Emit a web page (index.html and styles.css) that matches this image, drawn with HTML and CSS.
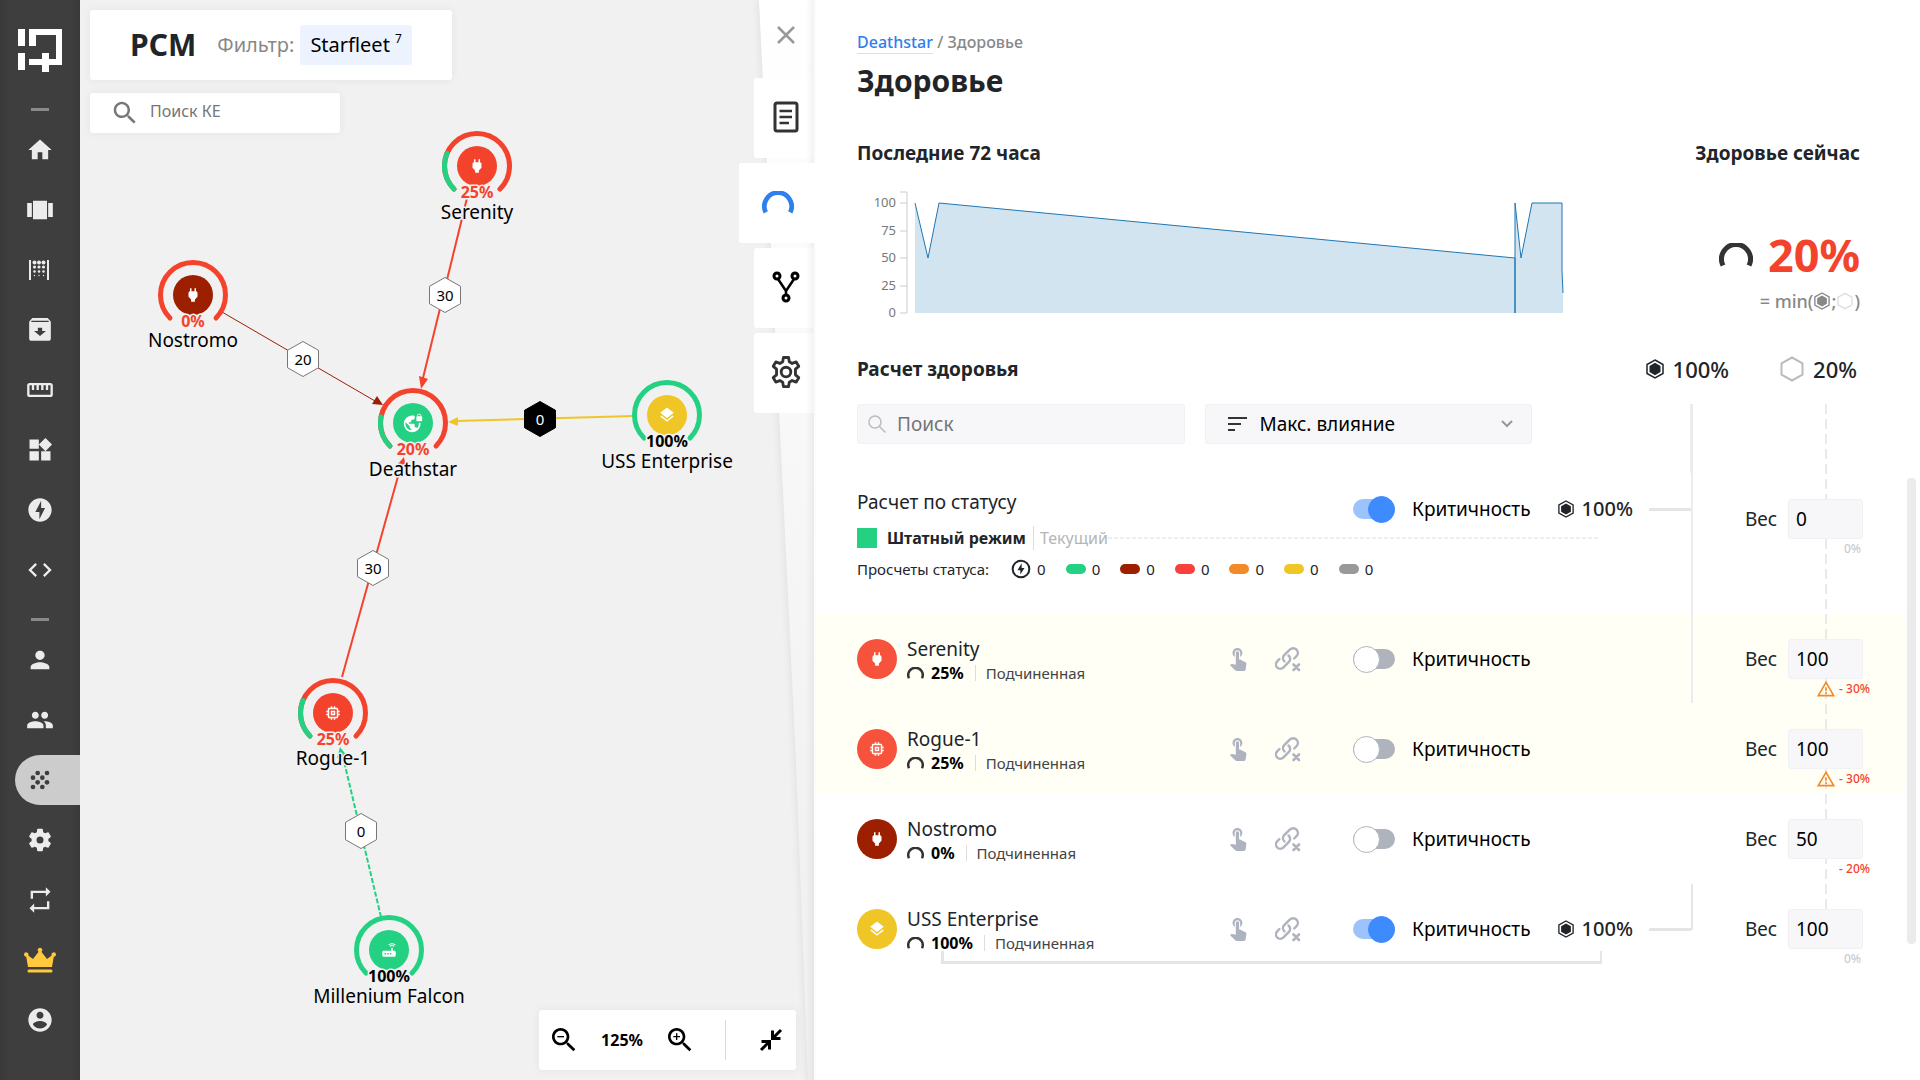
FILE: index.html
```html
<!DOCTYPE html>
<html lang="ru">
<head>
<meta charset="utf-8">
<title>РСМ — Здоровье</title>
<meta name="viewport" content="width=device-width, initial-scale=1">
<link rel="stylesheet" href="styles.css">
</head>
<body>
<svg class="sprite" aria-hidden="true">
  <symbol id="i-home" viewBox="0 0 24 24"><path d="M10 20v-6h4v6h5v-8h3L12 3 2 12h3v8z"/></symbol>
  <symbol id="i-carousel" viewBox="0 0 24 24"><path d="M6 20h12V4H6v16zm-5-2h4V6H1v12zM19 6v12h4V6h-4z"/></symbol>
  <symbol id="i-curtain" viewBox="0 0 24 24"><path d="M1 2h2v20H1zM19 2h2v20h-2z"/><g><circle cx="6.500" cy="4.500" r="2"/><circle cx="11" cy="4.500" r="2"/><circle cx="15.500" cy="4.500" r="2"/><circle cx="6.500" cy="9" r="1.600"/><circle cx="11" cy="9" r="1.600"/><circle cx="15.500" cy="9" r="1.600"/><circle cx="6.500" cy="13.500" r="1.300"/><circle cx="11" cy="13.500" r="1.300"/><circle cx="15.500" cy="13.500" r="1.300"/><circle cx="6.500" cy="17.500" r="0.700"/><circle cx="11" cy="17.500" r="0.700"/><circle cx="15.500" cy="17.500" r="0.700"/></g></symbol>
  <symbol id="i-archive" viewBox="0 0 24 24"><path fill-rule="evenodd" d="M5 1h14l2 2c.6.600 1 1.200 1 2v15c0 1.100-.9 2-2 2H4c-1.100 0-2-.9-2-2V5c0-.8.400-1.400 1-2zM4 3.500v1h16v-1zM12 17.500L17.500 13H14v-3h-4v3H6.500z"/></symbol>
  <symbol id="i-ruler" viewBox="0 0 24 24"><path d="M21 6H3c-1.100 0-2 .9-2 2v8c0 1.100.9 2 2 2h18c1.100 0 2-.9 2-2V8c0-1.100-.9-2-2-2zm0 10H3V8h2v4h2V8h2v4h2V8h2v4h2V8h2v4h2V8h2v8z"/></symbol>
  <symbol id="i-widgets" viewBox="0 0 24 24"><path d="M13 13v8h8v-8h-8zM3 21h8v-8H3v8zM3 3v8h8V3H3zm13.660-1.310L11 7.340 16.660 13l5.660-5.660-5.660-5.650z"/></symbol>
  <symbol id="i-bolt" viewBox="0 0 24 24"><path d="M12 2.020c-5.510 0-9.980 4.470-9.980 9.980s4.470 9.980 9.980 9.980 9.980-4.470 9.980-9.980S17.510 2.020 12 2.020zM11.480 20v-6.260H8L13 4v6.260h3.350L11.480 20z"/></symbol>
  <symbol id="i-bolt-line" viewBox="0 0 24 24"><circle cx="12" cy="12" r="10" fill="none" stroke="currentColor" stroke-width="2.400"/><path d="M11.200 18.500v-5H7.800l5-8.300v5.600h3.400z"/></symbol>
  <symbol id="i-code" viewBox="0 0 24 24"><path d="M9.400 16.600L4.800 12l4.600-4.600L8 6l-6 6 6 6 1.400-1.400zm5.200 0l4.600-4.600-4.600-4.600L16 6l6 6-6 6-1.400-1.400z"/></symbol>
  <symbol id="i-person" viewBox="0 0 24 24"><path d="M12 12c2.210 0 4-1.790 4-4s-1.790-4-4-4-4 1.790-4 4 1.790 4 4 4zm0 2c-2.670 0-8 1.340-8 4v2h16v-2c0-2.660-5.330-4-8-4z"/></symbol>
  <symbol id="i-group" viewBox="0 0 24 24"><path d="M16 11c1.660 0 2.990-1.340 2.990-3S17.660 5 16 5c-1.660 0-3 1.340-3 3s1.340 3 3 3zm-8 0c1.660 0 2.990-1.340 2.990-3S9.660 5 8 5C6.340 5 5 6.340 5 8s1.340 3 3 3zm0 2c-2.330 0-7 1.170-7 3.500V19h14v-2.500c0-2.330-4.670-3.500-7-3.500zm8 0c-.29 0-.62.020-.97.050 1.160.84 1.970 1.970 1.970 3.450V19h6v-2.500c0-2.330-4.670-3.500-7-3.500z"/></symbol>
  <symbol id="i-grain" viewBox="0 0 24 24"><circle cx="10" cy="6" r="2"/><circle cx="18" cy="6" r="2"/><circle cx="6" cy="10" r="2"/><circle cx="14" cy="10" r="2"/><circle cx="10" cy="14" r="2"/><circle cx="18" cy="14" r="2"/><circle cx="6" cy="18" r="2"/><circle cx="14" cy="18" r="2"/></symbol>
  <symbol id="i-gear" viewBox="0 0 24 24"><path fill-rule="evenodd" d="M19.140 12.940c.04-.3.060-.61.060-.94 0-.32-.02-.64-.07-.94l2.030-1.580c.18-.14.230-.41.120-.61l-1.920-3.320c-.12-.22-.37-.29-.59-.22l-2.390.96c-.5-.38-1.030-.7-1.620-.94L14.400 2.810c-.04-.24-.24-.41-.48-.41h-3.840c-.24 0-.43.170-.47.410L9.250 5.350C8.660 5.590 8.120 5.920 7.630 6.290L5.240 5.330c-.22-.08-.47 0-.59.220L2.740 8.870c-.12.210-.08.470.12.610l2.030 1.580C4.840 11.360 4.800 11.690 4.800 12s.020.64.070.94l-2.030 1.580c-.18.140-.23.410-.12.610l1.920 3.320c.12.220.37.290.59.220l2.390-.96c.5.380 1.030.7 1.620.94l.36 2.540c.05.240.24.410.48.410h3.840c.24 0 .44-.17.470-.41l.36-2.540c.59-.24 1.130-.56 1.620-.94l2.390.96c.22.080.47 0 .59-.22l1.920-3.320c.12-.22.070-.47-.12-.61zM12 15a3 3 0 1 1 0-6 3 3 0 0 1 0 6z"/></symbol>
  <symbol id="i-gear-line" viewBox="0 0 24 24"><g fill="none" stroke="currentColor" stroke-width="1.900" stroke-linejoin="round"><path d="M10.300 2.300h3.400l.5 2.900 1.900 1.100 2.700-1 1.700 2.900-2.200 1.900v3.800l2.200 1.900-1.700 2.900-2.700-1-1.900 1.100-.5 2.900h-3.400l-.5-2.900-1.900-1.100-2.700 1-1.700-2.900 2.200-1.900v-3.800L3.500 8.200l1.700-2.900 2.700 1 1.900-1.100z"/><circle cx="12" cy="12" r="3.200"/></g></symbol>
  <symbol id="i-repeat" viewBox="0 0 24 24"><path d="M6 6h11v3l4-4-4-4v3H4v7h2V6zm12 12H7v-3l-4 4 4 4v-3h13v-7h-2v5z"/></symbol>
  <symbol id="i-crown" viewBox="0 0 32 26"><path d="M4 20L2.200 9.800A2.200 2.200 0 1 1 4.300 8.400L9 12l5.600-7.200a2.200 2.200 0 1 1 2.800 0L23 12l4.700-3.600a2.200 2.200 0 1 1 2.100 1.400L28 20zM5 22.500h22a1.500 1.500 0 0 1 0 3H5a1.500 1.500 0 0 1 0-3z"/></symbol>
  <symbol id="i-account" viewBox="0 0 24 24"><path d="M12 2C6.480 2 2 6.480 2 12s4.480 10 10 10 10-4.480 10-10S17.520 2 12 2zm0 3c1.660 0 3 1.340 3 3s-1.340 3-3 3-3-1.340-3-3 1.340-3 3-3zm0 14.200c-2.500 0-4.710-1.280-6-3.220.03-1.990 4-3.080 6-3.080 1.990 0 5.970 1.090 6 3.080-1.290 1.940-3.500 3.220-6 3.220z"/></symbol>
  <symbol id="i-search" viewBox="0 0 24 24"><path d="M15.500 14h-.79l-.28-.27C15.410 12.590 16 11.110 16 9.500 16 5.910 13.090 3 9.500 3S3 5.910 3 9.500 5.910 16 9.500 16c1.610 0 3.090-.59 4.230-1.570l.27.280v.79l5 4.990L20.490 19l-4.990-5zm-6 0C7.010 14 5 11.990 5 9.500S7.010 5 9.500 5 14 7.010 14 9.500 11.990 14 9.500 14z"/></symbol>
  <symbol id="i-search-thin" viewBox="0 0 20 20"><g fill="none" stroke="currentColor" stroke-width="1.500"><circle cx="8" cy="8" r="6"/><path d="M12.500 12.500l6 6"/></g></symbol>
  <symbol id="i-touch" viewBox="4 2 16 22"><path d="M9 11.240V7.500C9 6.120 10.120 5 11.500 5S14 6.120 14 7.500v3.740c1.210-.81 2-2.180 2-3.740C16 5.010 13.990 3 11.500 3S7 5.010 7 7.500c0 1.560.79 2.930 2 3.740zm9.840 4.630l-4.540-2.260c-.17-.07-.35-.11-.54-.11H13v-6c0-.83-.67-1.500-1.500-1.500S10 6.670 10 7.500v10.740l-3.430-.72c-.08-.01-.15-.03-.24-.03-.31 0-.59.130-.79.330l-.79.800 4.940 4.940c.27.270.65.440 1.060.440h6.790c.75 0 1.330-.55 1.440-1.280l.75-5.270c.01-.07.020-.14.020-.2 0-.62-.38-1.160-.91-1.380z"/></symbol>
  <symbol id="i-unlink" viewBox="0 0 26 26"><g fill="none" stroke="currentColor" stroke-width="2.400" stroke-linecap="round"><path d="M9.500 15.500c-2-2-2-4.600-.3-6.300l5.600-5.600c1.900-1.900 4.900-1.900 6.700 0s1.800 4.700 0 6.600l-2.300 2.300"/><path d="M13.500 9.500c2 1.800 2.200 4.600.4 6.400l-5.400 5.500c-1.900 1.900-4.700 1.900-6.300.1-1.700-1.800-1.600-4.600.2-6.400l2-2.100"/><path d="M18.500 18.500l5.500 5.500M24 18.500L18.500 24" stroke-width="2.600"/></g></symbol>
  <symbol id="i-layers" viewBox="0 0 24 24"><path d="M11.990 18.540l-7.370-5.730L3 14.070l9 7 9-7-1.630-1.270-7.380 5.740zM12 16l7.360-5.730L21 9l-9-7-9 7 1.630 1.270L12 16z"/></symbol>
  <symbol id="i-plug" viewBox="0 0 24 24"><path d="M16.010 7L16 3h-2v4h-4V3H8v4h-.01C7 6.990 6 7.990 6 8.990v5.490L9.500 18v3h5v-3l3.500-3.510v-5.500c0-1-1-2-1.990-1.990z"/></symbol>
  <symbol id="i-chip" viewBox="0 0 24 24"><path d="M15 9H9v6h6V9zm-2 4h-2v-2h2v2zm8-2V9h-2V7c0-1.100-.9-2-2-2h-2V3h-2v2h-2V3H9v2H7c-1.100 0-2 .9-2 2v2H3v2h2v2H3v2h2v2c0 1.100.9 2 2 2h2v2h2v-2h2v2h2v-2h2c1.100 0 2-.9 2-2v-2h2v-2h-2v-2h2zm-4 6H7V7h10v10z"/></symbol>
  <symbol id="i-router" viewBox="0 0 24 24"><path d="M20.200 5.900l.8-.8C19.600 3.700 17.800 3 16 3s-3.600.7-5 2.100l.8.800C13 4.800 14.500 4.200 16 4.200s3 .6 4.200 1.700zm-.9.800c-.9-.9-2.100-1.400-3.300-1.400s-2.400.5-3.300 1.400l.8.800c.7-.7 1.600-1 2.500-1 .9 0 1.800.3 2.500 1l.8-.8zM19 13h-2V9h-2v4H5c-1.100 0-2 .9-2 2v4c0 1.100.9 2 2 2h14c1.100 0 2-.9 2-2v-4c0-1.100-.9-2-2-2zM8 18H6v-2h2v2zm3.500 0h-2v-2h2v2zm3.500 0h-2v-2h2v2z"/></symbol>
  <symbol id="i-globe-lock" viewBox="0 0 24 24"><path d="M22 4v-.5C22 2.120 20.880 1 19.500 1S17 2.120 17 3.500V4c-.55 0-1 .45-1 1v4c0 .55.450 1 1 1h5c.55 0 1-.45 1-1V5c0-.55-.45-1-1-1zm-.8 0h-3.400v-.5c0-.94.760-1.700 1.700-1.700s1.700.760 1.700 1.700V4zm-2.280 8c.04.330.080.660.080 1 0 2.080-.8 3.970-2.100 5.390-.26-.81-1-1.390-1.900-1.390h-1v-3c0-.55-.45-1-1-1H7v-2h2c.55 0 1-.45 1-1V8h2c1.100 0 2-.9 2-2V3.460c-.95-.3-1.950-.46-3-.46C5.480 3 1 7.480 1 13s4.480 10 10 10 10-4.480 10-10c0-.34-.02-.67-.05-1h-2.030zM10 20.930c-3.950-.49-7-3.850-7-7.930 0-.62.080-1.210.21-1.790L8 16v1c0 1.100.9 2 2 2v1.930z"/></symbol>
  <symbol id="i-warning" viewBox="0 0 24 24"><path d="M12 5.990L19.530 19H4.470L12 5.990M12 2L1 21h22L12 2zm1 14h-2v2h2v-2zm0-6h-2v4h2v-4z"/></symbol>
  <symbol id="i-arc" viewBox="0 0 34 24"><path d="M4 22.500A14.500 14.500 0 1 1 30 22.500" fill="none" stroke="currentColor" stroke-width="5"/></symbol>
  <symbol id="i-hex" viewBox="0 0 18 20"><path d="M9 1l8 4.500v9L9 19l-8-4.500v-9z" fill="none" stroke="currentColor" stroke-width="1.500"/><path d="M9 3.800l5.500 3.100v6.200L9 16.200l-5.500-3.100V6.900z"/></symbol>
  <symbol id="i-hex-line" viewBox="0 0 24 26"><path d="M12 1.500l10.500 5.800v11.400L12 24.500 1.500 18.700V7.300z" fill="none" stroke="currentColor" stroke-width="2"/></symbol>
  <symbol id="i-sort" viewBox="0 0 20 16"><path d="M0 1h19v2H0zM0 7h13v2H0zM0 13h7v2H0z"/></symbol>
</svg>

<div class="app">
  <nav class="sidebar" aria-label="Главное меню">
    <a class="logo" href="#" aria-label="На главную">
      <svg width="44" height="44" viewBox="0 0 44 44"><path d="M0 1h7v17H0zM0 25h7v17H0zM11 1h33v36H31v7h-7v-7H11v-6h13v-6h7v6h7V7H18v11h-7z" fill="#fff"/></svg>
    </a>
    <span class="rule"></span>
    <a class="item" href="#" aria-label="Домой"><svg class="ico-28"><use href="#i-home"/></svg></a>
    <a class="item" href="#" aria-label="Карусель"><svg class="ico-28"><use href="#i-carousel"/></svg></a>
    <a class="item" href="#" aria-label="События"><svg class="ico-24"><use href="#i-curtain"/></svg></a>
    <a class="item" href="#" aria-label="Архив"><svg class="ico-26"><use href="#i-archive"/></svg></a>
    <a class="item" href="#" aria-label="Метрики"><svg class="ico-28"><use href="#i-ruler"/></svg></a>
    <a class="item" href="#" aria-label="Виджеты"><svg class="ico-28"><use href="#i-widgets"/></svg></a>
    <a class="item" href="#" aria-label="Действия"><svg class="ico-28"><use href="#i-bolt"/></svg></a>
    <a class="item" href="#" aria-label="Код"><svg class="ico-28"><use href="#i-code"/></svg></a>
    <span class="rule"></span>
    <a class="item" href="#" aria-label="Пользователь"><svg class="ico-28"><use href="#i-person"/></svg></a>
    <a class="item" href="#" aria-label="Группы"><svg class="ico-28"><use href="#i-group"/></svg></a>
    <a class="item active" href="#" aria-label="РСМ" aria-current="page"><svg class="ico-28"><use href="#i-grain"/></svg></a>
    <a class="item" href="#" aria-label="Настройки"><svg class="ico-28"><use href="#i-gear"/></svg></a>
    <a class="item" href="#" aria-label="Обмен"><svg class="ico-28"><use href="#i-repeat"/></svg></a>
    <a class="item crown" href="#" aria-label="Лицензия"><svg class="ico-crown"><use href="#i-crown"/></svg></a>
    <a class="item" href="#" aria-label="Профиль"><svg class="ico-28"><use href="#i-account"/></svg></a>
  </nav>

  <main class="map">
    <svg class="graph" role="img" aria-label="Карта связей">
      <defs>
        <path id="ring" d="M-23 23A32.500 32.500 0 1 1 23 23"/>
        <path id="hex" d="M0-17.500L15.500-8.700V8.700L0 17.500-15.500 8.700V-8.700z"/>
      </defs>
      <g transform="translate(-80 0)">
        <g class="edge red"><path d="M467 198L423 378"/><path class="tip" d="M421 389L419 376L428 379z"/></g>
        <g class="edge red"><path d="M342 677L402 462"/><path class="tip" d="M404 457L397 465L406 468z"/></g>
        <g class="edge maroon"><path d="M222 312L375 401"/><path class="tip" d="M383 405L372 404L377 396z"/></g>
        <g class="edge yellow"><path d="M634 416L456 421"/><path class="tip" d="M448 422L458 417V426z"/></g>
        <g class="edge green dashed"><path d="M381 917L343 757"/><path class="tip" d="M340 747L347 756L337 758z"/></g>

        <g class="weight"><g transform="translate(445 295)"><use href="#hex"/><text y="6">30</text></g>
        <g transform="translate(303 359)"><use href="#hex"/><text y="6">20</text></g>
        <g transform="translate(373 568)"><use href="#hex"/><text y="6">30</text></g>
        <g transform="translate(361 831)"><use href="#hex"/><text y="6">0</text></g>
        <g class="solid" transform="translate(540 419)"><use href="#hex"/><text y="6">0</text></g></g>

        <g class="node red" transform="translate(477 166)"><use class="ring" href="#ring"/><path class="ring part" d="M-23 23A32.500 32.500 0 0 1-30-12.500"/><circle r="20"/><use class="glyph" href="#i-plug" x="-9" y="-9" width="18" height="18"/><text class="pct" y="32">25%</text><text class="name" y="53">Serenity</text></g>
        <g class="node maroon" transform="translate(193 295)"><use class="ring bad" href="#ring"/><circle r="20"/><use class="glyph" href="#i-plug" x="-9" y="-9" width="18" height="18"/><text class="pct" y="32">0%</text><text class="name" y="52">Nostromo</text></g>
        <g class="node green" transform="translate(413 423)"><use class="ring bad" href="#ring"/><path class="ring part" d="M-23 23A32.500 32.500 0 0 1-32-6"/><circle r="20"/><use class="glyph" href="#i-globe-lock" x="-10" y="-10" width="20" height="20"/><text class="pct" y="32">20%</text><text class="name" y="53">Deathstar</text></g>
        <g class="node yellow" transform="translate(667 415)"><use class="ring good" href="#ring"/><circle r="20"/><use class="glyph" href="#i-layers" x="-9" y="-9" width="18" height="18"/><text class="pct full" y="32">100%</text><text class="name" y="53">USS Enterprise</text></g>
        <g class="node red" transform="translate(333 713)"><use class="ring" href="#ring"/><path class="ring part" d="M-23 23A32.500 32.500 0 0 1-30-12.500"/><circle r="20"/><use class="glyph" href="#i-chip" x="-9" y="-9" width="18" height="18"/><text class="pct" y="32">25%</text><text class="name" y="52">Rogue-1</text></g>
        <g class="node green" transform="translate(389 950)"><use class="ring good" href="#ring"/><circle r="20"/><use class="glyph" href="#i-router" x="-9" y="-9" width="18" height="18"/><text class="pct full" y="32">100%</text><text class="name" y="53">Millenium Falcon</text></g>
      </g>
    </svg>

    <div class="map-head">
      <h1 class="map-title">РСМ</h1>
      <span class="map-filter">Фильтр:</span>
      <button class="chip" type="button">Starfleet <sup>7</sup></button>
    </div>
    <label class="map-search">
      <svg class="ico-30"><use href="#i-search"/></svg>
      <input type="text" placeholder="Поиск КЕ" aria-label="Поиск КЕ">
    </label>

    <svg class="fold" viewBox="0 0 60 1080" preserveAspectRatio="none" aria-hidden="true">
      <defs><linearGradient id="foldFill" x1="0" y1="0" x2="0" y2="1"><stop offset="0" stop-color="#fff"/><stop offset="0.800" stop-color="#f1f1f1"/></linearGradient></defs>
      <path d="M3 0L24 430L40 760L52 1080H60V0z" fill="url(#foldFill)"/>
    </svg>
    <div class="tabs">
      <button class="close" type="button" aria-label="Закрыть"><svg width="18" height="18" viewBox="0 0 18 18"><path d="M1 1l16 16M17 1L1 17" stroke="#999" stroke-width="2.500" fill="none"/></svg></button>
      <button class="tab" type="button" aria-label="Описание"><svg width="26" height="32" viewBox="0 0 26 32"><rect x="2" y="2" width="22" height="28" rx="2" fill="none" stroke="#333" stroke-width="3"/><path d="M6.500 10h12.500M6.500 16h12.500M6.500 22h9.500" stroke="#333" stroke-width="2.500"/></svg></button>
      <button class="tab current" type="button" aria-label="Здоровье"><svg class="arc-tab"><use href="#i-arc"/></svg></button>
      <button class="tab" type="button" aria-label="Связи"><svg width="28" height="32" viewBox="0 0 28 32"><g fill="none" stroke="#000" stroke-width="3"><circle cx="5" cy="5" r="3"/><circle cx="23" cy="5" r="3"/><circle cx="14" cy="27" r="3"/><path d="M6 8l8 12 8-12M14 19v5" stroke-width="2.500"/></g></svg></button>
      <button class="tab" type="button" aria-label="Настройки"><svg class="gear-tab"><use href="#i-gear-line"/></svg></button>
    </div>

    <div class="zoom">
      <button type="button" aria-label="Уменьшить"><svg width="32" height="32" viewBox="0 0 24 24"><use href="#i-search"/><path d="M7 9h5v1H7z"/></svg></button>
      <output>125%</output>
      <button type="button" aria-label="Увеличить"><svg width="32" height="32" viewBox="0 0 24 24"><use href="#i-search"/><path d="M7 9h2V7h1v2h2v1h-2v2H9v-2H7z"/></svg></button>
      <span class="zoom-rule"></span>
      <button type="button" aria-label="Вписать"><svg width="24" height="24" viewBox="0 0 24 24"><g fill="none" stroke="#000" stroke-width="3"><path d="M22 2l-7 7M13.500 2.500v8h8M2 22l7-7M2.500 13.500h8v8"/></g></svg></button>
    </div>
  </main>

  <section class="panel">
    <nav class="crumbs" aria-label="Путь"><a href="#">Deathstar</a> / <span>Здоровье</span></nav>
    <h2 class="title">Здоровье</h2>

    <div class="overview">
      <div>
        <h3>Последние 72 часа</h3>
        <svg class="chart" viewBox="0 0 708 136" role="img" aria-label="Здоровье за 72 часа">
          <path class="area" d="M58 126V16L71 71L82 16L658 71V126H658V16L664 71L675 16H705V84L706 106V126z"/>
          <path class="line" d="M58 16L71 71L82 16L658 71V126V16L664 71L675 16H705V84L706 106"/>
          <path class="axis" d="M43 5H50V126H43M43 16H50M43 44H50M43 71H50M43 99H50"/>
          <g class="ticks"><text x="39" y="20">100</text><text x="39" y="48">75</text><text x="39" y="75">50</text><text x="39" y="103">25</text><text x="39" y="130">0</text></g>
        </svg>
      </div>
      <div class="now">
        <h3>Здоровье сейчас</h3>
        <p class="now-value"><svg class="arc-now"><use href="#i-arc"/></svg>20%</p>
        <p class="formula">= min(<svg class="hex-s"><use href="#i-hex"/></svg>;<svg class="hex-s pale"><use href="#i-hex-line"/></svg>)</p>
      </div>
    </div>

    <div class="calc-head">
      <h3>Расчет здоровья</h3>
      <p class="total"><svg class="hex-m"><use href="#i-hex"/></svg>100%</p>
      <p class="total weak"><svg class="hex-l"><use href="#i-hex-line"/></svg>20%</p>
    </div>

    <div class="calc">
      <i class="guide bold"></i><i class="guide thin"></i><i class="guide dash"></i><i class="scroll"></i>
      <div class="filters">
        <label class="field"><svg class="ico-20"><use href="#i-search-thin"/></svg><input type="text" placeholder="Поиск" aria-label="Поиск"></label>
        <label class="field"><svg class="ico-sort"><use href="#i-sort"/></svg><select aria-label="Сортировка"><option>Макс. влияние</option><option>Мин. влияние</option></select><svg class="chevron" viewBox="0 0 14 10"><path d="M2 2l5 5 5-5" fill="none" stroke="#999" stroke-width="2"/></svg></label>
      </div>

      <div class="row status">
        <div class="status-info">
          <h4>Расчет по статусу</h4>
          <p class="mode"><i class="square"></i><b>Штатный режим</b><span>Текущий</span></p>
          <p class="counts"><span>Просчеты статуса:</span>
            <span class="count"><svg class="ico-20"><use href="#i-bolt-line"/></svg>0</span>
            <span class="count"><i class="pill c-green"></i>0</span>
            <span class="count"><i class="pill c-maroon"></i>0</span>
            <span class="count"><i class="pill c-red"></i>0</span>
            <span class="count"><i class="pill c-orange"></i>0</span>
            <span class="count"><i class="pill c-yellow"></i>0</span>
            <span class="count"><i class="pill c-gray"></i>0</span></p>
        </div>
        <div class="crit">
          <label><input type="checkbox" role="switch" checked>Критичность</label>
          <span class="crit-value"><svg class="hex-s"><use href="#i-hex"/></svg>100%</span>
        </div>
        <div class="load"><label for="w0">Вес</label><input id="w0" type="text" value="0"><small>0%</small></div>
      </div>

      <div class="row warn">
        <div class="unit">
          <span class="badge b-red"><svg class="ico-18"><use href="#i-plug"/></svg></span>
          <div><h4>Serenity</h4><p><svg class="arc-s"><use href="#i-arc"/></svg><b>25%</b><span>Подчиненная</span></p></div>
        </div>
        <div class="acts"><button type="button" aria-label="Выбрать"><svg class="touch"><use href="#i-touch"/></svg></button><button type="button" aria-label="Отвязать"><svg class="ico-26"><use href="#i-unlink"/></svg></button></div>
        <div class="crit"><label><input type="checkbox" role="switch">Критичность</label></div>
        <div class="load"><label for="w1">Вес</label><input id="w1" type="text" value="100"><small class="loss"><svg class="ico-20"><use href="#i-warning"/></svg>- 30%</small></div>
      </div>

      <div class="row warn">
        <div class="unit">
          <span class="badge b-red"><svg class="ico-18"><use href="#i-chip"/></svg></span>
          <div><h4>Rogue-1</h4><p><svg class="arc-s"><use href="#i-arc"/></svg><b>25%</b><span>Подчиненная</span></p></div>
        </div>
        <div class="acts"><button type="button" aria-label="Выбрать"><svg class="touch"><use href="#i-touch"/></svg></button><button type="button" aria-label="Отвязать"><svg class="ico-26"><use href="#i-unlink"/></svg></button></div>
        <div class="crit"><label><input type="checkbox" role="switch">Критичность</label></div>
        <div class="load"><label for="w2">Вес</label><input id="w2" type="text" value="100"><small class="loss"><svg class="ico-20"><use href="#i-warning"/></svg>- 30%</small></div>
      </div>

      <div class="row">
        <div class="unit">
          <span class="badge b-maroon"><svg class="ico-18"><use href="#i-plug"/></svg></span>
          <div><h4>Nostromo</h4><p><svg class="arc-s"><use href="#i-arc"/></svg><b>0%</b><span>Подчиненная</span></p></div>
        </div>
        <div class="acts"><button type="button" aria-label="Выбрать"><svg class="touch"><use href="#i-touch"/></svg></button><button type="button" aria-label="Отвязать"><svg class="ico-26"><use href="#i-unlink"/></svg></button></div>
        <div class="crit"><label><input type="checkbox" role="switch">Критичность</label></div>
        <div class="load"><label for="w3">Вес</label><input id="w3" type="text" value="50"><small class="loss">- 20%</small></div>
      </div>

      <div class="row last">
        <div class="unit">
          <span class="badge b-yellow"><svg class="ico-18"><use href="#i-layers"/></svg></span>
          <div><h4>USS Enterprise</h4><p><svg class="arc-s"><use href="#i-arc"/></svg><b>100%</b><span>Подчиненная</span></p></div>
        </div>
        <div class="acts"><button type="button" aria-label="Выбрать"><svg class="touch"><use href="#i-touch"/></svg></button><button type="button" aria-label="Отвязать"><svg class="ico-26"><use href="#i-unlink"/></svg></button></div>
        <div class="crit"><label><input type="checkbox" role="switch" checked>Критичность</label><span class="crit-value"><svg class="hex-s"><use href="#i-hex"/></svg>100%</span></div>
        <div class="load"><label for="w4">Вес</label><input id="w4" type="text" value="100"><small>0%</small></div>
      </div>
    </div>
  </section>
</div>
</body>
</html>
```
FILE: styles.css
```css
:root {
  --red: #f4432c;
  --maroon: #9c2000;
  --green: #24d182;
  --yellow: #f0c526;
  --orange: #f38a28;
  --blue: #2f80ed;
  --ink: #212529;
  --muted: #888;
  --line: #e5e5e5;
  --canvas: #f1f1f1;
}

* { box-sizing: border-box; }

body {
  margin: 0;
  color: var(--ink);
  font: 19px/28px "Noto Sans", sans-serif;
}

h1, h2, h3, h4, p { margin: 0; }
h3 { font-size: 19px; line-height: 28px; }
h4 { font-size: 19px; line-height: 24px; font-weight: 400; }
svg { fill: currentColor; flex: none; }
button { padding: 0; border: 0; background: none; color: inherit; font: inherit; cursor: pointer; }
input, select { font: inherit; color: #000; }

.sprite { position: absolute; width: 0; height: 0; }
.ico-18 { width: 18px; height: 18px; }
.ico-20 { width: 20px; height: 20px; }
.ico-24 { width: 24px; height: 24px; }
.ico-26 { width: 26px; height: 26px; }
.ico-28 { width: 28px; height: 28px; }
.ico-30 { width: 30px; height: 30px; }

.app {
  display: grid;
  grid-template-columns: 80px minmax(0, 2fr) minmax(0, 3fr);
  min-height: 100vh;
}

/* Sidebar */
.sidebar {
  display: flex;
  flex-direction: column;
  background: linear-gradient(90deg, #393939, #3e3e3e 8px, #3e3e3e 72px, #393939);
  color: #ececec;
}
.logo { height: 90px; padding: 28px 18px 0; color: #fff; }
.rule { height: 30px; }
.rule::before { content: ""; display: block; width: 18px; height: 3px; margin: 18px auto 0; background: #8a8a8a; }
.item { display: flex; align-items: center; justify-content: center; height: 60px; color: inherit; }
.item.active {
  justify-content: flex-start;
  height: 50px;
  margin: 5px 0 5px 15px;
  padding-left: 11px;
  border-radius: 25px 0 0 25px;
  background: #ccc;
  color: #3d3d3d;
}
.item.crown { color: #ffc83d; }
.ico-crown { width: 32px; height: 26px; }

/* Map */
.map { position: relative; background: var(--canvas); overflow: hidden; }
.graph { position: absolute; inset: 0; width: 100%; height: 100%; }
.red { --c: var(--red); }
.maroon { --c: var(--maroon); }
.green { --c: var(--green); }
.yellow { --c: var(--yellow); }
.edge path { fill: none; stroke: var(--c); stroke-width: 2; }
.edge .tip { fill: var(--c); stroke: none; }
.edge.maroon path { stroke-width: 1; }
.dashed path { stroke-dasharray: 5 2; }
.node circle { fill: var(--c); }
.node text, .weight text { text-anchor: middle; }
.ring { fill: none; stroke: var(--red); stroke-width: 5; stroke-linecap: round; }
.ring.good, .ring.part { stroke: var(--green); }
.glyph { color: #fff; fill: #fff; }
.node .name { fill: #000; }
.pct { font-size: 16px; font-weight: 700; fill: var(--red); }
.pct.full { fill: #000; }
.node text { stroke: var(--canvas); stroke-width: 3; paint-order: stroke; stroke-linejoin: round; }
.weight use { fill: #fff; stroke: #777; }
.weight text { font-size: 15px; fill: #000; }
.weight .solid use { fill: #000; stroke: #000; }
.weight .solid text { fill: #fff; }

.map-head, .map-search, .zoom {
  position: absolute;
  display: flex;
  align-items: center;
  border-radius: 3px;
  background: #fff;
  box-shadow: 0 0 10px rgba(0, 0, 0, .06);
}
.map-head { top: 10px; left: 10px; height: 70px; padding: 0 40px; }
.map-title { font-size: 30px; line-height: 40px; }
.map-filter { margin: 0 6px 0 21px; color: var(--muted); font-size: 20px; }
.chip { height: 40px; padding: 0 10px; border-radius: 3px; background: #ecf3fe; color: #000; font-size: 20px; }
.chip sup { font-size: 12px; line-height: 12px; vertical-align: 9px; }
.map-search { top: 93px; left: 10px; width: 250px; height: 40px; padding-left: 20px; color: #777; }
.map-search input { width: 160px; margin-left: 8px; padding: 0 2px 4px; border: 0; font-size: 16px; }
input::placeholder { color: #757575; opacity: 1; }

.fold { position: absolute; top: 0; right: 0; width: 60px; height: 100%; filter: drop-shadow(-2px 0 3px rgba(0, 0, 0, .06)); }
.tabs {
  position: absolute;
  top: 0;
  right: 0;
  display: flex;
  flex-direction: column;
  align-items: flex-end;
  gap: 5px;
}
.map::after {
  content: "";
  position: absolute;
  top: 0;
  right: 0;
  bottom: 0;
  width: 10px;
  background: linear-gradient(90deg, transparent, rgba(0, 0, 0, .05) 8px, #fcfcfc 8px);
}
.close { width: 60px; height: 73px; }
.tab {
  display: flex;
  align-items: center;
  justify-content: center;
  width: 62px;
  height: 80px;
  padding: 0 0 2px 2px;
  border-radius: 3px 0 0 3px;
  background: #fff;
  color: #333;
}
.tab.current { z-index: 1; width: 77px; padding-left: 0; color: var(--blue); }
.arc-tab { width: 32px; height: 23px; }
.gear-tab { width: 36px; height: 36px; }

.zoom { right: 20px; bottom: 10px; height: 60px; padding: 0 13px 0 9px; color: #000; }
.zoom button { display: flex; }
.zoom output { margin: 0 21px; font-size: 16px; font-weight: 700; }
.zoom-rule { width: 1px; height: 40px; margin: 0 33px 0 29px; background: #d9d9e0; }

/* Panel */
.panel { padding: 30px 14px 40px 41px; background: #fff; }
.crumbs { color: var(--muted); font-size: 16px; line-height: 24px; font-weight: 500; }
.crumbs a { border-bottom: 1px solid #cfe2fb; color: var(--blue); text-decoration: none; }
.title { margin-top: 7px; font-size: 30px; line-height: 40px; }

.overview { display: grid; grid-template-columns: minmax(0, 708px) auto; justify-content: space-between; margin-top: 38px; padding-right: 46px; }
.chart { display: block; width: 100%; margin-top: 20px; }
.area { fill: #d2e4f0; }
.line { fill: none; stroke: #1f77b4; }
.axis { fill: none; stroke: #ccc; stroke-width: 1; }
.ticks { font-size: 13px; fill: #777; text-anchor: end; }
.now { text-align: right; }
.now-value { display: flex; justify-content: flex-end; align-items: center; gap: 15px; margin-top: 58px; color: var(--red); font-size: 45px; line-height: 60px; font-weight: 700; }
.arc-now { width: 34px; height: 24px; color: #333; }
.formula { display: flex; justify-content: flex-end; align-items: center; gap: 1px; margin-top: 2px; color: var(--muted); font-size: 18px; line-height: 28px; font-weight: 500; }
.hex-s { width: 16px; height: 18px; }
.hex-s.pale { color: #ddd; }
.hex-m { width: 18px; height: 20px; }
.hex-l { width: 24px; height: 26px; color: #bbb; }

.calc-head { display: flex; align-items: center; margin-top: 32px; padding-right: 49px; }
.calc-head h3 { flex: 1; }
.total { display: flex; align-items: center; gap: 9px; font-size: 22px; font-weight: 500; }
.total.weak { margin-left: 51px; gap: 9px; }

.calc { position: relative; isolation: isolate; margin: 21px -14px 0 -41px; }
.guide { position: absolute; z-index: -1; background: #ececee; }
.guide.bold { top: 0; right: 227px; width: 3px; height: 69px; }
.guide.thin { top: 69px; right: 227px; width: 2px; height: 230px; z-index: 1; }
.guide.dash { top: 0; right: 93px; bottom: 45px; width: 2px; z-index: 1; background: repeating-linear-gradient(#e9e9ec 0 10px, transparent 10px 15px); }
.scroll { position: absolute; top: 74px; right: 4px; bottom: 30px; width: 9px; border-radius: 4px; background: #ebebeb; }

.filters { display: flex; gap: 20px; padding: 0 388px 0 41px; }
.field { position: relative; flex: 1; }
.field input, .field select {
  display: block;
  width: 100%;
  height: 40px;
  border: 1px solid #f0f0f2;
  border-radius: 3px;
  background: #f7f7fa;
  appearance: none;
}
.field input { padding: 0 10px 0 39px; }
.field select { padding: 0 40px 0 54px; }
.field .ico-20 { position: absolute; top: 10px; left: 10px; color: #bbb; }
.ico-sort { position: absolute; top: 12px; left: 23px; width: 20px; height: 16px; color: #333; }
.chevron { position: absolute; top: 15px; right: 18px; width: 14px; height: 10px; }

.row {
  display: grid;
  grid-template-columns: minmax(0, 1fr) 128px 392px 118px;
  align-items: center;
  height: 90px;
  margin-right: 14px;
  padding: 0 43px 0 41px;
}
.row.warn { background: #fffff5; }
.row.status { align-items: start; height: 170px; padding-top: 46px; }
.status-info { grid-column: span 2; }
.status-info p { display: flex; align-items: center; font-size: 15px; white-space: nowrap; }
.mode { margin-top: 12px; line-height: 24px; }
.square { width: 20px; height: 20px; margin-right: 10px; background: var(--green); }
.mode span { margin-left: 7px; padding-left: 6px; border-left: 1px solid #ddd; color: #b5b5b5; font-size: 16px; }
.mode b { font-size: 16px; }
.mode::after { content: ""; flex: 1; height: 2px; margin-right: -246px; background: repeating-linear-gradient(90deg, #eee 0 4px, transparent 4px 6px); }
.counts { margin-top: 7px; line-height: 24px; }
.count { display: flex; align-items: center; gap: 6px; margin-left: 20px; }
.counts span:first-child { margin-right: 2px; }
.pill { width: 20px; height: 10px; border-radius: 5px; }
.c-green { background: var(--green); }
.c-maroon { background: var(--maroon); }
.c-red { background: #f7413a; }
.c-orange { background: var(--orange); }
.c-yellow { background: var(--yellow); }
.c-gray { background: #999; }

.unit { display: flex; align-items: center; gap: 10px; }
.unit > div { padding-top: 4px; }
.badge { display: flex; align-items: center; justify-content: center; width: 40px; height: 40px; border-radius: 50%; color: #fff; }
.b-red { background: #f6523c; }
.b-maroon { background: var(--maroon); }
.b-yellow { background: var(--yellow); }
.unit p { display: flex; align-items: center; font-size: 15px; line-height: 24px; }
.unit b { margin: 0 11px 0 7px; color: #000; font-size: 16px; }
.unit p span { padding-left: 11px; background: linear-gradient(#ddd, #ddd) 0 50% / 1px 16px no-repeat; color: #444; }
.arc-s { width: 17px; height: 12px; color: #333; }

.acts { display: flex; align-items: center; gap: 28px; padding-left: 4px; color: #aeb3bf; }
.acts button { display: flex; }
.touch { width: 18px; height: 24px; }

.crit { display: flex; align-items: center; color: #000; }
.crit label { display: flex; align-items: center; gap: 17px; }
.crit input {
  display: flex;
  align-items: center;
  width: 42px;
  height: 20px;
  margin: 0;
  border-radius: 10px;
  background: #aeb3bc;
  appearance: none;
}
.crit input::before { content: ""; width: 25px; height: 25px; flex: none; border: 1px solid #aeb3bc; border-radius: 50%; background: #fff; }
.crit input:checked { justify-content: flex-end; background: #9cc3fc; }
.crit input:checked::before { border-color: #3d8bfd; background: #3d8bfd; }
.crit-value { display: flex; align-items: center; gap: 8px; margin-left: 27px; color: var(--ink); font-size: 20px; font-weight: 500; }
.crit-value::after { content: ""; width: 42px; height: 3px; margin-left: 8px; background: var(--line); }

.load { position: relative; z-index: 2; display: flex; align-items: center; justify-content: space-between; }
.load input { width: 75px; height: 40px; padding: 0 7px; border: 1px solid #f1f1f4; border-radius: 3px; background: #f7f7fa; }
.load small { position: absolute; top: 42px; right: 2px; display: flex; align-items: center; font-size: 12px; line-height: 16px; font-weight: 500; color: #ccc; }
.load small.loss { right: -7px; gap: 3px; color: var(--red); }
.load small svg { margin: -2px 0; color: var(--orange); }
.status .load { margin-top: 9px; }
.status .crit { margin-top: 5px; }

/* Bracket that ties the last unit to its critical value */
.row.last { position: relative; }
.row.last::before {
  content: "";
  position: absolute;
  left: 125px;
  right: 304px;
  bottom: 10px;
  height: 10px;
  border: solid var(--line);
  border-width: 0 2px 3px 3px;
}
.row.last::after {
  content: "";
  position: absolute;
  top: 0;
  right: 213px;
  width: 2px;
  height: 46px;
  background: var(--line);
}
```
